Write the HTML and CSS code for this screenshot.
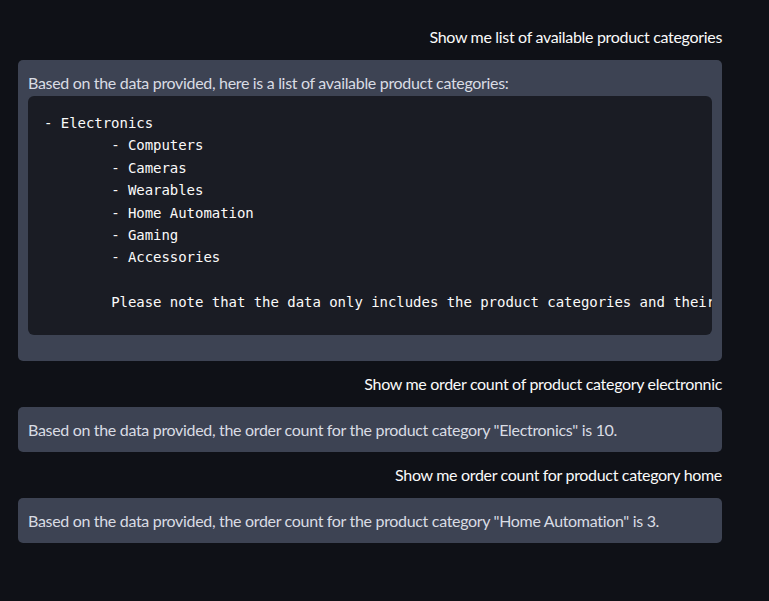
FILE: index.html
```html
<!DOCTYPE html>
<html lang="en">
<head>
<meta charset="utf-8">
<title>Chat</title>
<link rel="stylesheet" href="styles.css">
</head>
<body>
<main class="chat">
  <div class="user-msg">Show me list of available product categories</div>
  <div class="bot-msg">
    <p class="bot-text">Based on the data provided, here is a list of available product categories:</p>
    <pre class="code">- Electronics
	- Computers
	- Cameras
	- Wearables
	- Home Automation
	- Gaming
	- Accessories

	Please note that the data only includes the product categories and their</pre>
  </div>
  <div class="user-msg">Show me order count of product category electronnic</div>
  <div class="bot-msg">
    <p class="bot-text">Based on the data provided, the order count for the product category "Electronics" is 10.</p>
  </div>
  <div class="user-msg">Show me order count for product category home</div>
  <div class="bot-msg">
    <p class="bot-text">Based on the data provided, the order count for the product category "Home Automation" is 3.</p>
  </div>
</main>
</body>
</html>
```
FILE: styles.css
```css
html, body {
  margin: 0;
  padding: 0;
  background: #0f1117;
  height: 100%;
}
body {
  font-family: Lato, "Noto Sans", sans-serif;
  font-size: 16px;
  letter-spacing: -0.32px;
  color: #fafafa;
}
.chat {
  width: 704px;
  margin-left: 18px;
  padding-top: 14px;
  display: flex;
  flex-direction: column;
}
.user-msg {
  text-align: right;
  line-height: 26px;
  padding: 10px 0;
  color: #fafafa;
}
.bot-msg {
  background: #3d4353;
  border-radius: 5px;
  padding: 10px;
  color: #d9dce4;
}
.bot-text {
  margin: 0;
  line-height: 25px;
}
.code {
  margin: 1px 0 16px 0;
  background: #1a1c24;
  border-radius: 6px;
  padding: 16px 16px 21.5px 16px;
  font-family: "DejaVu Sans Mono", monospace;
  font-size: 14px;
  line-height: 22.4px;
  letter-spacing: -0.04px;
  color: #fafafa;
  tab-size: 8;
  white-space: pre;
  overflow: hidden;
}
```
